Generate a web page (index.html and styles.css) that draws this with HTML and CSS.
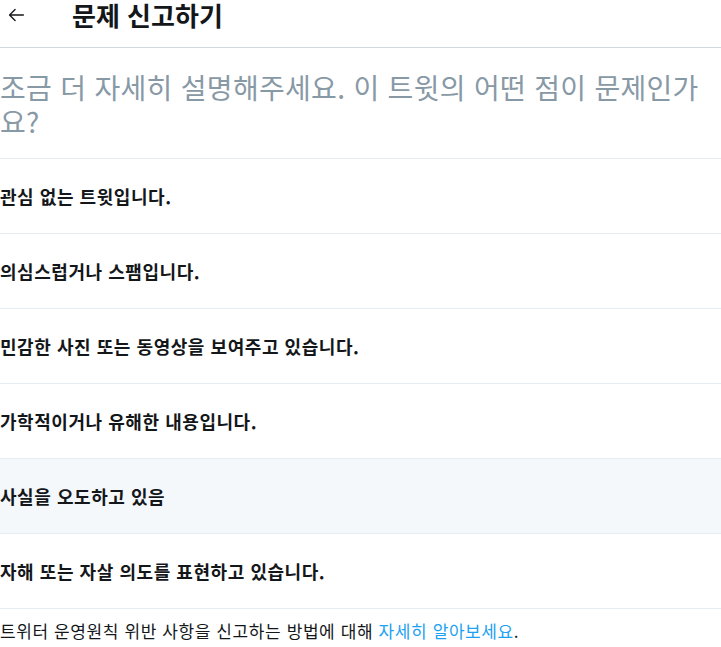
FILE: index.html
```html
<!DOCTYPE html>
<html lang="ko">
<head>
<meta charset="utf-8">
<link rel="stylesheet" href="styles.css">
</head>
<body>
<div class="page">
  <header class="header">
    <span class="back">
      <svg viewBox="0 0 24 24" width="22" height="22"><path d="M20 11.25H6.81l4.72-4.72a.75.75 0 0 0-1.06-1.06l-6 6a.75.75 0 0 0 0 1.06l6 6a.75.75 0 0 0 1.06-1.06l-4.72-4.72H20a.75.75 0 0 0 0-1.5z" fill="#14171a"/></svg>
    </span>
    <h1 class="title">문제 신고하기</h1>
  </header>
  <div class="question">조금 더 자세히 설명해주세요. 이 트윗의 어떤 점이 문제인가요?</div>
  <ul class="options">
    <li class="option">관심 없는 트윗입니다.</li>
    <li class="option">의심스럽거나 스팸입니다.</li>
    <li class="option">민감한 사진 또는 동영상을 보여주고 있습니다.</li>
    <li class="option">가학적이거나 유해한 내용입니다.</li>
    <li class="option option-hover">사실을 오도하고 있음</li>
    <li class="option">자해 또는 자살 의도를 표현하고 있습니다.</li>
  </ul>
  <p class="footer">트위터 운영원칙 위반 사항을 신고하는 방법에 대해 <a class="link" href="#">자세히 알아보세요</a>.</p>
</div>
</body>
</html>
```

FILE: styles.css
```css
html, body {
  margin: 0;
  padding: 0;
  background: #ffffff;
}
body {
  font-family: "Noto Sans CJK KR", "Noto Sans", sans-serif;
  color: #14171a;
}
.page {
  width: 721px;
}
.header {
  display: flex;
  align-items: center;
  height: 48px;
  box-sizing: border-box;
  padding-bottom: 17px;
  border-bottom: 1px solid #cfd9de;
}
.back {
  display: flex;
  width: 72px;
  padding-left: 5px;
  box-sizing: border-box;
}
.title {
  margin: 0;
  font-size: 26px;
  font-weight: 700;
  line-height: 30px;
  color: #14171a;
}
.question {
  font-size: 28px;
  letter-spacing: 0.3px;
  line-height: 34px;
  color: #8899a6;
  padding: 22px 0 20px;
  border-bottom: 1px solid #e6ecf0;
}
.options {
  list-style: none;
  margin: 0;
  padding: 0;
}
.option {
  height: 75px;
  box-sizing: border-box;
  display: flex;
  align-items: center;
  font-size: 18px;
  letter-spacing: 0.55px;
  font-weight: 700;
  border-bottom: 1px solid #e6ecf0;
  color: #14171a;
}
.option-hover {
  background: #f5f8fa;
}
.footer {
  margin: 0;
  padding: 10px 0;
  font-size: 17px;
  letter-spacing: 0.6px;
  line-height: 24px;
  color: #14171a;
}
.link {
  color: #1da1f2;
  text-decoration: none;
}
```
